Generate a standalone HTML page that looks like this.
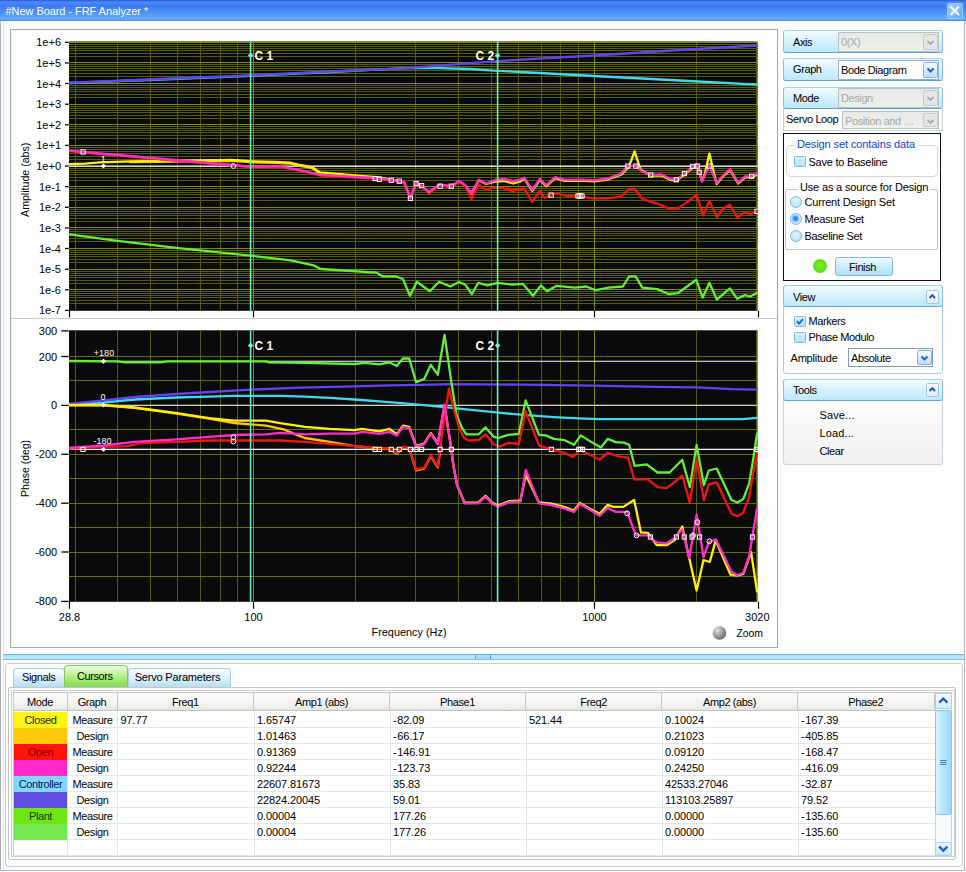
<!DOCTYPE html>
<html><head><meta charset="utf-8"><title>FRF Analyzer</title>
<style>
*{box-sizing:border-box}
html,body{margin:0;padding:0}
body{width:966px;height:872px;position:relative;overflow:hidden;background:#fcfdfc;font:11px "Liberation Sans",sans-serif;color:#000}
.abs{position:absolute}
#frame{left:0;top:0;width:964.8px;height:871.3px;border:1px solid #aab4be;border-top:none;background:#fcfdfc;box-shadow:inset 2px 0 0 #fdfdfd,inset 3px 0 0 #e4e6e6}
#tb{left:0;top:0;width:966px;height:21px;background:linear-gradient(#2458d8 0,#4c8cf6 2px,#3c7af2 6px,#4e92f8 13px,#66aefc 19px,#4a86dc 21px)}
#tb span{position:absolute;left:5.5px;top:4.5px;color:#fff;font-size:11px;letter-spacing:-.06px;white-space:nowrap}
#cls{left:947px;top:3px;width:15.5px;height:15.5px;border-radius:2px;background:linear-gradient(135deg,#9accff,#62a8f8);border:1px solid #9cccff}
#cp{left:10px;top:29px;width:767.5px;height:618.5px;border:1px solid #a0aaa2;background:#fdfefd}
#cdiv{left:11px;top:318px;width:766px;height:1px;background:#c8ccc8}
.hb{left:783px;width:160px;border:1px solid #86bcee;border-top-color:#a6d0f4;border-bottom-color:#5e9fe6;border-radius:3px;background:linear-gradient(#f4fcff 0,#dcf3fd 40%,#bde8fb 100%)}
.hb .l{position:absolute;left:9px;top:4px;letter-spacing:-.4px}
.cb{position:absolute;border:1px solid #b4c2c6;background:linear-gradient(#e6e9e6,#eef0ec);color:#a4aaa4;white-space:nowrap;overflow:hidden}
.cb.en{background:#fff;color:#000;border-color:#8fb0d0}
.cb .t{position:absolute;left:2px;top:3px;letter-spacing:-.4px}
.dd{position:absolute;right:0px;top:1px;width:15px;bottom:1px;border:1px solid #c6ccd0;border-radius:2px;background:#e4e6e4}
.cb.en .dd{border-color:#7fb2ea;background:linear-gradient(#f4faff,#bfdcf8)}
.chk{position:absolute;width:11.6px;height:11.4px;border:1px solid #80b8ec;background:linear-gradient(#d8f3fd,#b0e3fb);border-radius:1.5px}
.rad{position:absolute;width:11.8px;height:11.8px;border:1px solid #7ab6ee;background:radial-gradient(circle at 50% 30%,#e0f5fe,#b2e1fa);border-radius:50%}
.tx{position:absolute;white-space:nowrap;letter-spacing:-.4px}
table{border-collapse:collapse}
</style></head><body>
<div class="abs" id="frame"></div>
<div class="abs" id="tb"><span>#New Board - FRF Analyzer *</span></div>
<div class="abs" id="cls"><svg width="14" height="14" viewBox="0 0 14 14" style="position:absolute;left:0;top:0"><path d="M3.2 3.2L10.3 10.3M10.3 3.2L3.2 10.3" stroke="#fff" stroke-width="2.1" stroke-linecap="square"/></svg></div>
<div class="abs" id="cp"></div>
<div class="abs" id="cdiv"></div>
<svg width="966" height="872" viewBox="0 0 966 872" style="position:absolute;left:0;top:0">
<rect x="69.0" y="41.5" width="688.5" height="269.3" fill="#0a0a0a"/>
<rect x="69.0" y="330.3" width="688.5" height="271.49999999999994" fill="#0a0a0a"/>
<path d="M69.0 291.5H757.5M69.0 293.5H757.5M69.0 295.5H757.5M69.0 297.5H757.5M69.0 300.5H757.5M69.0 303.5H757.5M69.0 271.5H757.5M69.0 273.5H757.5M69.0 275.5H757.5M69.0 277.5H757.5M69.0 280.5H757.5M69.0 283.5H757.5M69.0 250.5H757.5M69.0 252.5H757.5M69.0 254.5H757.5M69.0 256.5H757.5M69.0 259.5H757.5M69.0 262.5H757.5M69.0 229.5H757.5M69.0 231.5H757.5M69.0 233.5H757.5M69.0 235.5H757.5M69.0 238.5H757.5M69.0 241.5H757.5M69.0 209.5H757.5M69.0 211.5H757.5M69.0 213.5H757.5M69.0 215.5H757.5M69.0 218.5H757.5M69.0 221.5H757.5M69.0 188.5H757.5M69.0 190.5H757.5M69.0 192.5H757.5M69.0 194.5H757.5M69.0 197.5H757.5M69.0 200.5H757.5M69.0 168.5H757.5M69.0 170.5H757.5M69.0 172.5H757.5M69.0 174.5H757.5M69.0 177.5H757.5M69.0 180.5H757.5M69.0 147.5H757.5M69.0 149.5H757.5M69.0 151.5H757.5M69.0 153.5H757.5M69.0 156.5H757.5M69.0 159.5H757.5M69.0 126.5H757.5M69.0 128.5H757.5M69.0 130.5H757.5M69.0 132.5H757.5M69.0 135.5H757.5M69.0 138.5H757.5M69.0 106.5H757.5M69.0 108.5H757.5M69.0 110.5H757.5M69.0 112.5H757.5M69.0 115.5H757.5M69.0 118.5H757.5M69.0 85.5H757.5M69.0 87.5H757.5M69.0 89.5H757.5M69.0 91.5H757.5M69.0 94.5H757.5M69.0 97.5H757.5M69.0 64.5H757.5M69.0 66.5H757.5M69.0 68.5H757.5M69.0 70.5H757.5M69.0 73.5H757.5M69.0 76.5H757.5M69.0 44.5H757.5M69.0 46.5H757.5M69.0 48.5H757.5M69.0 50.5H757.5M69.0 53.5H757.5M69.0 56.5H757.5M75.5 41.5V310.8M75.5 330.3V601.8M117.5 41.5V310.8M117.5 330.3V601.8M150.5 41.5V310.8M150.5 330.3V601.8M177.5 41.5V310.8M177.5 330.3V601.8M200.5 41.5V310.8M200.5 330.3V601.8M220.5 41.5V310.8M220.5 330.3V601.8M237.5 41.5V310.8M237.5 330.3V601.8M355.5 41.5V310.8M355.5 330.3V601.8M415.5 41.5V310.8M415.5 330.3V601.8M458.5 41.5V310.8M458.5 330.3V601.8M491.5 41.5V310.8M491.5 330.3V601.8M518.5 41.5V310.8M518.5 330.3V601.8M541.5 41.5V310.8M541.5 330.3V601.8M560.5 41.5V310.8M560.5 330.3V601.8M578.5 41.5V310.8M578.5 330.3V601.8M696.5 41.5V310.8M696.5 330.3V601.8M756.5 41.5V310.8M756.5 330.3V601.8" stroke="#565c06" stroke-width="1" fill="none" shape-rendering="crispEdges"/>
<path d="M69.0 576.5H757.5M69.0 552.5H757.5M69.0 527.5H757.5M69.0 503.5H757.5M69.0 478.5H757.5M69.0 454.5H757.5M69.0 429.5H757.5M69.0 405.5H757.5M69.0 380.5H757.5M69.0 356.5H757.5" stroke="#666e0a" stroke-width="1" fill="none" shape-rendering="crispEdges"/>
<path d="M69.0 289.5H757.5M69.0 269.5H757.5M69.0 248.5H757.5M69.0 227.5H757.5M69.0 207.5H757.5M69.0 186.5H757.5M69.0 166.5H757.5M69.0 145.5H757.5M69.0 124.5H757.5M69.0 104.5H757.5M69.0 83.5H757.5M69.0 62.5H757.5M69.0 42.5H757.5M253.5 41.5V310.8M253.5 330.3V601.8M594.5 41.5V310.8M594.5 330.3V601.8" stroke="#7e8c10" stroke-width="1" fill="none" shape-rendering="crispEdges"/>
<path d="M69.0 166.1H757.5M69.0 361.2H757.5M69.0 405.2H757.5M69.0 449.3H757.5" stroke="#f6f6f6" stroke-width="1.15" fill="none"/>
<clipPath id="ct"><rect x="69.0" y="41.5" width="689.5" height="269.3"/></clipPath>
<clipPath id="cb"><rect x="69.0" y="330.3" width="689.5" height="271.49999999999994"/></clipPath>
<g clip-path="url(#ct)">
<polyline points="130,162.2 180,161.5 232,160.8 253,162.3 275,162.8 290,163.5 300,165.9 312.3,168.2 319.8,173.2" stroke="#ffc400" stroke-width="2.3" fill="none" stroke-linejoin="round" stroke-linecap="round"/>
<polyline points="69,83 160,79.5 250,75.8 330,72 380,69.3 400,68.3 430,67.8 470,69 497,70.8 540,73 594,76 680,80.5 757,84.6" stroke="#3fd8ee" stroke-width="2.3" fill="none" stroke-linejoin="round" stroke-linecap="round"/>
<polyline points="69,82.7 115,81 160,79 250,75.3 330,71.5 400,68.6 497,61.1 594,55.5 680,50 757,45.5" stroke="#6242f2" stroke-width="2.3" fill="none" stroke-linejoin="round" stroke-linecap="round"/>
<polyline points="69.3,234.3 115.9,240.7 171.8,247.4 250,255.6 291,260.4 313.4,265.3 320.9,269 376.8,272.7 382.4,276.4 395.4,276.4 402.9,279 410,295.8 416.8,281.7 429.8,291.3 439.1,281.7 450.3,286.5 458.9,282 465.2,284.6 471.9,294 478.3,282.8 487.6,285.4 497.7,282.8 511.8,284.6 523,283.9 533,295.8 540.9,285.4 547.2,291.3 556.5,285.8 575.2,287.6 586.4,286.5 595.7,290.2 608.7,287.6 622.9,286.5 629.2,276.4 635.6,276.4 642.3,287.6 657.2,289.1 668.4,294 677.7,293.2 696.3,279.8 702.6,297.7 709.4,282.8 716.8,299.5 729.9,288.4 737.3,298.8 744.8,295.1 750.4,296.6 757,292.8" stroke="#62ee3a" stroke-width="2.3" fill="none" stroke-linejoin="round" stroke-linecap="round"/>
<polyline points="69,164.1 85,163.6 100,162.4 130,161.3 180,160.6 232,159.9 253,161.4 275,161.9 290,162.6 300,165 312.3,167.3 319.8,172.3 354.5,175.3 379.4,177.3 399.3,181.5 404.2,182.7 410.4,198.4 416.1,183.2 421.6,186 429,192.7 439,185.2 451.4,186.5 458.9,181.5 465,185.2 471.3,193.9 478.8,180.3 486.2,184 496,181.5 503.6,181 513.5,183.5 520,181.5 524.2,178.7 532.3,190.8 539.8,180 546.3,186.2 555.2,178.1 564.6,180.8 580.8,180.6 594.2,181.4 607.7,179.5 621.1,174.6 628.7,167 634.6,151.3 640.5,169.6 650.7,175.5 661.5,175.5 669.6,179.5 676.3,180.8 684.4,174.6 692.5,167.9 697.3,165.2 701.9,180 704.6,175 709.4,153.5 714,173.6 716.7,184 723.4,176 730.1,170.1 738.2,183.5 745,177.3 751.7,177.3 757,174.6" stroke="#fff200" stroke-width="2.3" fill="none" stroke-linejoin="round" stroke-linecap="round"/>
<polyline points="69,151.2 100,154 130,156.5 180,161 233,165.5 253,167.3 280,166.8 304.8,171.8 319.8,175.5 354.5,177.5 374.4,178.7 399.3,181.7 404.2,183 410.4,198.6 416.1,183.4 421.6,186.2 429,193.5 439,185.7 451.4,187 458.9,182 465,186 471.3,199.1 478.8,184.7 486.2,189.7 496,187.2 503.6,188.4 513.5,191.4 507,188.5 516.2,189.8 524.2,188.5 532.3,201.9 539.8,191.1 544.4,197.9 551.1,195.2 556.5,193.3 567.3,196 580.8,196.5 594.2,198.7 607.7,198.4 621.1,196.5 629.2,189 634.6,189 642.7,199.2 656.1,203.3 669.6,208.6 677.7,208.6 688.4,201.4 696.5,194.6 703.2,215.4 709.4,200.6 716.7,216.7 723.4,208.6 730.1,204.6 737.4,218 743.6,212.7 751.7,214 757,211.3" stroke="#f01414" stroke-width="2.3" fill="none" stroke-linejoin="round" stroke-linecap="round"/>
<polyline points="69,150.7 100,153.5 130,156 180,160.5 233,165 253,166.8 280,166.1 304.8,171.1 319.8,174.8 354.5,176.8 374.4,178 399.3,181 404.2,182.2 410.4,198.4 416.1,182.7 421.6,185.5 429,192.2 439,184.7 451.4,186 458.9,181 465,184.7 471.3,193.4 478.8,179.8 486.2,183.5 496.1,179.8 503.6,179 513.5,181 520,179.8 524.2,177.7 532.3,189.8 539.8,179 546.3,185.2 555.2,177.1 564.6,179.8 580.8,179.6 594.2,180.4 607.7,178.5 621.1,173.6 627.9,166.1 635.9,165.6 641.3,171 650.7,175 661.5,174.5 669.6,178.5 676.3,179.8 684.4,173.6 692.5,166.9 697.3,164.2 701.9,181.7 709.4,165.6 716.7,183 723.4,175 730.1,169.1 738.2,182.5 745,176.3 751.7,176.3 757,173.6" stroke="#ff2fc8" stroke-width="2.3" fill="none" stroke-linejoin="round" stroke-linecap="round"/>
</g>
<g clip-path="url(#cb)">
<polyline points="68.7,404.5 103.5,402.5 134.5,399.5 176.8,397.5 209,396.6 234,395.8 280,395.8 304.8,396.6 329.7,397.8 354.5,399.5 379.4,401.3 404.2,403.3 429.1,405.7 453.9,408.2 478.8,410.7 503.6,413.2 526.9,415.2 553.8,417.1 578,418.4 599.6,419.2 742.3,419.2 757,417.9" stroke="#3fd8ee" stroke-width="2.3" fill="none" stroke-linejoin="round" stroke-linecap="round"/>
<polyline points="68.7,404 103.5,400.3 134.5,397 176.8,394 209,392 251.3,389.6 300,387.6 354.5,386.4 389.3,385.4 434,384.6 449,384.1 520,384.6 594.2,385.6 656.1,386.9 696.5,387.4 731.5,389.1 757,389.6" stroke="#6242f2" stroke-width="2.3" fill="none" stroke-linejoin="round" stroke-linecap="round"/>
<polyline points="68.7,361 117,361.4 125,362.3 160,362.3 168,361.3 266,361.3 268.7,362.3 304.8,362.8 354.5,364 364.5,362.8 379.4,364.3 389.3,362.3 396.8,366 403,358.5 409.2,358.5 416.1,382.1 424.1,379.2 430.8,364.8 437.8,374.7 444.5,334.9 451.4,382.1 456.4,414.4 461.4,426.9 466.3,434.3 478.8,434.3 485.5,427.4 493.7,436.8 498.6,438 508,434.8 518.8,434 525.6,400.4 539,434.8 545.8,435.4 553.8,438.9 564.6,440.2 574,444.8 580.8,435.4 591.5,442.1 600.9,447.5 607.7,438.9 615.7,442.1 623.8,442.6 629.2,444.8 634.6,465.8 646.7,464.4 657.5,472.5 669.6,472.5 682.3,459.7 689.8,487.2 696.6,444.9 703.9,485.2 708.8,470.5 716.7,468.5 731.5,500 737.4,502.5 743.3,499 749.2,483.3 753.1,459.7 757,434" stroke="#62ee3a" stroke-width="2.3" fill="none" stroke-linejoin="round" stroke-linecap="round"/>
<polyline points="68.7,405.3 103.5,405.3 134.5,407.8 176.8,413.6 209,418.6 234,423 266,425.6 283.6,429.3 292.4,433.1 304.8,438 329.7,441.8 354.5,446.2 374.4,448 389.3,449 396.8,453.7 403,447.4 409.2,448.7 416.1,470.4 424.1,468.7 430.8,456.1 437.8,467.4 441,445" stroke="#ffc400" stroke-width="2.3" fill="none" stroke-linejoin="round" stroke-linecap="round"/>
<polyline points="68.7,405 103.5,405 134.5,407.5 176.8,413.2 209,418.2 234,420.7 266,420.7 280,423.1 304.8,426.9 329.7,428.9 354.5,430.1 362,428.9 379.4,431.3 389.3,428.9 396.8,434.3 403,425.6 409.2,426.9 416.1,446 424.1,443.5 430.8,433 437.8,443.5 444.5,405.5 451.4,449.2 453.3,464.8 457,484.7 464.5,502.6 478.1,502.6 485.6,495.8 491.8,502.6 498,505.6 509.2,501.1 520.4,500.6 525.8,474.8 539,502.4 551.4,503.6 563.9,506.8 573.8,510.5 580,503 589.8,508.8 599.7,513.8 607.5,504.9 613.4,506.9 623.3,506.9 634.1,500 641,532.4 647.9,532.8 656.7,545.2 666.5,545.2 674.4,540.3 682.3,526.5 689.2,558 696.6,590.5 703.5,560 709.8,562 715.7,540.3 730.5,574.7 737.4,575.7 743.3,573.8 751.1,552.1 757,591.5" stroke="#fff200" stroke-width="2.3" fill="none" stroke-linejoin="round" stroke-linecap="round"/>
<polyline points="68.7,448.5 103.5,447.2 127,446.2 142,443 176.8,441.8 209,440.5 280,440.5 304.8,441.8 329.7,443.8 354.5,446.2 379.4,448 389.3,448.7 396.8,453 403,446.7 409.2,448 416.1,469.6 424.1,467.9 430.8,455.4 437.8,466.6 442.7,429.3 449,388.4 453.9,409.5 458.9,426.9 463.9,438 468.8,440.5 478.8,439.8 485.5,434.3 493.7,444.3 499.9,446.7 508,442.9 518.8,444 525.6,411.1 539,445.3 551.1,449.4 564.6,452.9 572.7,456.9 579.4,450.2 589.8,454.8 599.7,459.7 607.5,452.8 619.3,456.7 628.2,457.7 634.1,479.3 647.9,479.3 657.7,487.2 666.5,488.2 674.4,482.3 682.3,475.4 689.8,502.9 696.6,459.7 703.9,500 708.8,484.3 716.7,482.3 731.5,513.8 737.4,516.3 743.3,512.8 749.2,497 753.1,473.4 757,453.8" stroke="#f01414" stroke-width="2.3" fill="none" stroke-linejoin="round" stroke-linecap="round"/>
<polyline points="68.7,448 103.5,445.5 134.5,441.8 176.8,439.3 209,436.8 234,435 266,434.3 280,432.8 304.8,434.3 329.7,433.6 354.5,433.6 362,431.8 379.4,433.8 389.3,431.8 396.8,435.6 403,426.9 409.2,428.1 416.1,446.7 424.1,444.3 430.8,433.6 437.8,444.3 444.5,404.5 451.4,449.2 453.3,464.8 457,484.7 464.5,503.4 478.1,503.4 485.6,496.6 491.8,503.4 498,506.6 509.2,502.1 520.4,501.6 525.8,469.8 539,503.4 551.4,505.1 563.9,508.3 573.8,512 580,504.1 589.8,509.8 599.7,515.7 607.5,507.9 615.4,511.8 627.2,511.8 631.1,522.6 636.1,535.4 647.9,535.4 656.7,542.3 666.5,543.3 674.4,538.3 682.3,529.5 689.2,558 696.6,514.7 703.5,557 708.8,542.3 715.7,539.3 731.5,571.8 737.4,575.3 743.3,572.8 749.2,556 753.1,532.4 757,508.8" stroke="#ff2fc8" stroke-width="2.3" fill="none" stroke-linejoin="round" stroke-linecap="round"/>
</g>
<path d="M250.6 41.5V310.8M250.6 330.3V601.8" stroke="#6aecc0" stroke-width="1.6" fill="none"/>
<path d="M497.6 41.5V310.8M497.6 330.3V601.8" stroke="#6aecc0" stroke-width="1.6" fill="none"/>
<g stroke="#fff" stroke-width="1" fill="none"><rect x="81" y="149.9" width="4.2" height="4.2"/><rect x="373.1" y="176.4" width="4.2" height="4.2"/><rect x="377.3" y="177.2" width="4.2" height="4.2"/><rect x="389.2" y="178.1" width="4.2" height="4.2"/><rect x="397.2" y="179.1" width="4.2" height="4.2"/><rect x="408.3" y="196.3" width="4.2" height="4.2"/><rect x="414" y="181.4" width="4.2" height="4.2"/><rect x="419.5" y="183.4" width="4.2" height="4.2"/><rect x="438.1" y="184.1" width="4.2" height="4.2"/><rect x="449.3" y="184.1" width="4.2" height="4.2"/><rect x="549" y="193.1" width="4.2" height="4.2"/><rect x="575.9" y="193.9" width="4.2" height="4.2"/><rect x="577.9" y="193.9" width="4.2" height="4.2"/><rect x="579.9" y="193.9" width="4.2" height="4.2"/><rect x="625.8" y="164" width="4.2" height="4.2"/><rect x="633.8" y="164" width="4.2" height="4.2"/><rect x="648.6" y="172.9" width="4.2" height="4.2"/><rect x="674.2" y="177.7" width="4.2" height="4.2"/><rect x="682.3" y="171.5" width="4.2" height="4.2"/><rect x="690.4" y="164.3" width="4.2" height="4.2"/><rect x="695.2" y="164" width="4.2" height="4.2"/><rect x="697.1" y="170.2" width="4.2" height="4.2"/><rect x="707.3" y="164" width="4.2" height="4.2"/><rect x="749.6" y="174.2" width="4.2" height="4.2"/><rect x="754.9" y="209.2" width="4.2" height="4.2"/><rect x="80.9" y="447.3" width="4.2" height="4.2"/><rect x="373.1" y="447.3" width="4.2" height="4.2"/><rect x="377.3" y="447.3" width="4.2" height="4.2"/><rect x="389.2" y="447.3" width="4.2" height="4.2"/><rect x="397.2" y="447.3" width="4.2" height="4.2"/><rect x="408.3" y="447.3" width="4.2" height="4.2"/><rect x="414" y="447.3" width="4.2" height="4.2"/><rect x="419.5" y="447.3" width="4.2" height="4.2"/><rect x="438.1" y="447.3" width="4.2" height="4.2"/><rect x="449.3" y="447.3" width="4.2" height="4.2"/><rect x="549.3" y="447.3" width="4.2" height="4.2"/><rect x="576.7" y="447.3" width="4.2" height="4.2"/><rect x="578.5" y="447.3" width="4.2" height="4.2"/><rect x="580.4" y="447.3" width="4.2" height="4.2"/><rect x="754.9" y="447.3" width="4.2" height="4.2"/><rect x="648.3" y="534.9" width="4.2" height="4.2"/><rect x="674.3" y="534.9" width="4.2" height="4.2"/><rect x="682.1" y="534.9" width="4.2" height="4.2"/><rect x="690" y="534.9" width="4.2" height="4.2"/><rect x="697.5" y="534.9" width="4.2" height="4.2"/><rect x="750.4" y="534.9" width="4.2" height="4.2"/><circle cx="233.4" cy="166" r="2.4"/><circle cx="233.4" cy="437.3" r="2.4"/><circle cx="233.4" cy="441.5" r="2.4"/><circle cx="627.2" cy="513.4" r="2.4"/><circle cx="636.5" cy="535.4" r="2.4"/><circle cx="697.4" cy="522.2" r="2.4"/><circle cx="709.4" cy="541.3" r="2.4"/><circle cx="693.1" cy="535.4" r="2.4"/></g>
<path d="M100.9 166L103.5 163.4L106.1 166L103.5 168.6Z" fill="#fff"/>
<path d="M100.9 361.3L103.5 358.7L106.1 361.3L103.5 363.9Z" fill="#fff"/>
<path d="M100.9 405L103.5 402.4L106.1 405L103.5 407.6Z" fill="#fff"/>
<path d="M100.9 449.4L103.5 446.8L106.1 449.4L103.5 452Z" fill="#fff"/>
<path d="M247.8 55.5L250.6 52.7L253.4 55.5L250.6 58.3Z" fill="#7af2cc"/>
<path d="M494.8 55.5L497.6 52.7L500.4 55.5L497.6 58.3Z" fill="#7af2cc"/>
<path d="M247.8 345.5L250.6 342.7L253.4 345.5L250.6 348.3Z" fill="#7af2cc"/>
<path d="M494.8 345.5L497.6 342.7L500.4 345.5L497.6 348.3Z" fill="#7af2cc"/>
<g font-family="'Liberation Sans',sans-serif" font-size="11" fill="#000">
<text x="61" y="46.3" text-anchor="end">1e+6</text>
<path d="M65 42.3H68.7" stroke="#000" stroke-width="1.3"/>
<text x="61" y="66.9" text-anchor="end">1e+5</text>
<path d="M65 62.9H68.7" stroke="#000" stroke-width="1.3"/>
<text x="61" y="87.5" text-anchor="end">1e+4</text>
<path d="M65 83.5H68.7" stroke="#000" stroke-width="1.3"/>
<text x="61" y="108.2" text-anchor="end">1e+3</text>
<path d="M65 104.2H68.7" stroke="#000" stroke-width="1.3"/>
<text x="61" y="128.8" text-anchor="end">1e+2</text>
<path d="M65 124.8H68.7" stroke="#000" stroke-width="1.3"/>
<text x="61" y="149.4" text-anchor="end">1e+1</text>
<path d="M65 145.4H68.7" stroke="#000" stroke-width="1.3"/>
<text x="61" y="170" text-anchor="end">1e+0</text>
<path d="M65 166H68.7" stroke="#000" stroke-width="1.3"/>
<text x="61" y="190.7" text-anchor="end">1e-1</text>
<path d="M65 186.7H68.7" stroke="#000" stroke-width="1.3"/>
<text x="61" y="211.3" text-anchor="end">1e-2</text>
<path d="M65 207.3H68.7" stroke="#000" stroke-width="1.3"/>
<text x="61" y="231.9" text-anchor="end">1e-3</text>
<path d="M65 227.9H68.7" stroke="#000" stroke-width="1.3"/>
<text x="61" y="252.5" text-anchor="end">1e-4</text>
<path d="M65 248.5H68.7" stroke="#000" stroke-width="1.3"/>
<text x="61" y="273.2" text-anchor="end">1e-5</text>
<path d="M65 269.2H68.7" stroke="#000" stroke-width="1.3"/>
<text x="61" y="293.8" text-anchor="end">1e-6</text>
<path d="M65 289.8H68.7" stroke="#000" stroke-width="1.3"/>
<text x="61" y="314.4" text-anchor="end">1e-7</text>
<path d="M65 310.4H68.7" stroke="#000" stroke-width="1.3"/>
<text x="57.2" y="334.9" text-anchor="end">300</text>
<path d="M61.3 330.9H68.7" stroke="#000" stroke-width="1.3"/>
<text x="57.2" y="360.5" text-anchor="end">200</text>
<path d="M61.3 356.5H68.7" stroke="#000" stroke-width="1.3"/>
<text x="57.2" y="409.4" text-anchor="end">0</text>
<path d="M61.3 405.4H68.7" stroke="#000" stroke-width="1.3"/>
<text x="57.2" y="458.3" text-anchor="end">-200</text>
<path d="M61.3 454.3H68.7" stroke="#000" stroke-width="1.3"/>
<text x="57.2" y="507.2" text-anchor="end">-400</text>
<path d="M61.3 503.2H68.7" stroke="#000" stroke-width="1.3"/>
<text x="57.2" y="556" text-anchor="end">-600</text>
<path d="M61.3 552H68.7" stroke="#000" stroke-width="1.3"/>
<text x="57.2" y="605.4" text-anchor="end">-800</text>
<path d="M61.3 601.4H68.7" stroke="#000" stroke-width="1.3"/>
<path d="M69.5 310.8V317.3M69.5 601.8V608.8" stroke="#000" stroke-width="1.2"/>
<text x="69.5" y="621" text-anchor="middle">28.8</text>
<path d="M253.5 310.8V317.3M253.5 601.8V608.8" stroke="#000" stroke-width="1.2"/>
<text x="253.5" y="621" text-anchor="middle">100</text>
<path d="M594.5 310.8V317.3M594.5 601.8V608.8" stroke="#000" stroke-width="1.2"/>
<text x="594.5" y="621" text-anchor="middle">1000</text>
<path d="M758.5 310.8V317.3M758.5 601.8V608.8" stroke="#000" stroke-width="1.2"/>
<text x="757.3" y="621" text-anchor="middle">3020</text>
<text x="409" y="636" text-anchor="middle" textLength="75" lengthAdjust="spacingAndGlyphs">Frequency (Hz)</text>
<text x="736.5" y="637" textLength="26.5" lengthAdjust="spacingAndGlyphs">Zoom</text>
<text transform="translate(28.7,179.8) rotate(-90)" text-anchor="middle" textLength="74.3" lengthAdjust="spacingAndGlyphs">Amplitude (abs)</text>
<text transform="translate(28.7,468.4) rotate(-90)" text-anchor="middle" textLength="57" lengthAdjust="spacingAndGlyphs">Phase (deg)</text>
</g>
<g font-family="'Liberation Sans',sans-serif" font-size="12" font-weight="bold" fill="#fff">
<text x="254.6" y="60">C 1</text>
<text x="494.1" y="60" text-anchor="end">C 2</text>
<text x="254.6" y="350">C 1</text>
<text x="494.1" y="350" text-anchor="end">C 2</text>
</g>
<g font-family="'Liberation Sans',sans-serif" font-size="9" fill="#fff" text-anchor="middle">
<text x="103.2" y="161.6">1</text>
<text x="104" y="355.5">+180</text><text x="103" y="400.3">0</text><text x="102.5" y="444">-180</text>
</g>
<defs><radialGradient id="sph" cx="0.35" cy="0.3" r="0.75"><stop offset="0" stop-color="#e4e4e4"/><stop offset="0.55" stop-color="#9a9a9a"/><stop offset="1" stop-color="#6a6a6a"/></radialGradient></defs>
<circle cx="719.5" cy="633" r="6.8" fill="url(#sph)"/>
</svg>
<!-- right side panel -->
<div class="abs hb" style="top:30px;height:22.7px"><span class="l" style="top:4.5px">Axis</span></div>
<div class="cb" style="left:838px;top:32px;width:101px;height:19.5px"><span class="t">0(X)</span><div class="dd"><svg width="13" height="15" viewBox="0 0 13 15"><path d="M3.5 6L6.5 9L9.5 6" stroke="#a8acb0" stroke-width="1.8" fill="none"/></svg></div></div>
<div class="abs hb" style="top:58.3px;height:22.4px"><span class="l" style="top:4.2px">Graph</span></div>
<div class="cb en" style="left:838px;top:60.2px;width:101px;height:19.5px"><span class="t">Bode Diagram</span><div class="dd"><svg width="13" height="15" viewBox="0 0 13 15"><path d="M3.5 5.5L6.5 8.5L9.5 5.5" stroke="#2a5ad8" stroke-width="2" fill="none"/></svg></div></div>
<div class="abs hb" style="top:86.5px;height:22px"><span class="l">Mode</span></div>
<div class="cb" style="left:838px;top:88.2px;width:101px;height:19.5px"><span class="t">Design</span><div class="dd"><svg width="13" height="15" viewBox="0 0 13 15"><path d="M3.5 6L6.5 9L9.5 6" stroke="#a8acb0" stroke-width="1.8" fill="none"/></svg></div></div>
<div class="abs" style="left:783px;top:108.6px;width:160px;height:22px;border:1px solid #c8d0d4;border-top:none;background:#fdfdfb"></div>
<div class="tx" style="left:786px;top:113px">Servo Loop</div>
<div class="cb" style="left:842px;top:110.5px;width:97px;height:18.5px"><span class="t">Position and …</span><div class="dd"><svg width="13" height="15" viewBox="0 0 13 15"><path d="M3.5 6L6.5 9L9.5 6" stroke="#a8acb0" stroke-width="1.8" fill="none"/></svg></div></div>
<!-- design box -->
<div class="abs" style="left:783px;top:133px;width:158px;height:148px;border:1.3px solid #111;background:#fefefe"></div>
<div class="abs" style="left:786px;top:145px;width:152px;height:31.5px;border:1px solid #d4d8cc;border-radius:5px"></div>
<div class="tx" style="left:794px;top:138px;padding:0 3px;background:#fefefe;color:#0a46d2;letter-spacing:-.1px">Design set contains data</div>
<div class="chk" style="left:794px;top:156px"></div>
<div class="tx" style="left:808.5px;top:155.5px;letter-spacing:-.23px">Save to Baseline</div>
<div class="abs" style="left:784.6px;top:189px;width:153.4px;height:61px;border:1px solid #b4c2cc;border-radius:2px"></div>
<div class="tx" style="left:797px;top:180.5px;padding:0 3px;background:#fefefe;letter-spacing:-.17px">Use as a source for Design</div>
<div class="rad" style="left:789.9px;top:196.2px"></div><div class="tx" style="left:804.5px;top:195.5px;letter-spacing:-.18px">Current Design Set</div>
<div class="rad" style="left:789.9px;top:213.1px"><div style="position:absolute;left:2.4px;top:2.4px;width:5px;height:5px;border-radius:50%;background:#3c8cf0;box-shadow:0 0 0 1.2px #8cc4f6"></div></div><div class="tx" style="left:804.5px;top:212.5px;letter-spacing:-.27px">Measure Set</div>
<div class="rad" style="left:789.9px;top:229.9px"></div><div class="tx" style="left:804.5px;top:229.5px;letter-spacing:-.36px">Baseline Set</div>
<div class="abs" style="left:813px;top:259px;width:14px;height:14px;border-radius:50%;background:radial-gradient(circle at 50% 45%,#7af020,#5cdc10 70%,#8ae850)"></div>
<div class="abs" style="left:835px;top:257px;width:58px;height:18.5px;border:1px solid #86b6e4;border-radius:3px;background:linear-gradient(#f2fbff,#c8ecfc 55%,#b2e0f9);text-align:center;line-height:18px;letter-spacing:-.4px;padding-right:3px">Finish</div>
<!-- view -->
<div class="abs" style="left:783px;top:285.4px;width:160px;height:88.6px;border:1px solid #a8cdee;border-radius:3px;background:#fefefe"></div>
<div class="abs hb" style="top:285.4px;height:22.1px"><span class="l" style="top:4.6px">View</span></div>
<div class="abs" style="left:926px;top:289.5px;width:12.5px;height:14px;border:1px solid #a0c6ec;border-radius:2px;background:linear-gradient(#fff,#dcecfa)"><svg width="11" height="12" viewBox="0 0 11 12" style="position:absolute;left:0;top:0"><path d="M2.5 7L5.3 4.2L8 7" stroke="#1c4ed0" stroke-width="1.9" fill="none"/></svg></div>
<div class="chk" style="left:794px;top:315.5px"><svg width="10" height="10" viewBox="0 0 10 10" style="position:absolute;left:0;top:0"><path d="M1.8 4.2L4 6.6L8 2.2" stroke="#2260dc" stroke-width="1.9" fill="none"/></svg></div>
<div class="tx" style="left:808.5px;top:314.5px">Markers</div>
<div class="chk" style="left:794px;top:331.5px"></div>
<div class="tx" style="left:808.5px;top:330.5px">Phase Modulo</div>
<div class="tx" style="left:790.5px;top:351.5px;letter-spacing:-.2px">Amplitude</div>
<div class="cb en" style="left:848px;top:348px;width:85px;height:18.5px;border-color:#7f9db9"><span class="t">Absolute</span><div class="dd"><svg width="13" height="15" viewBox="0 0 13 15"><path d="M3.5 5.5L6.5 8.5L9.5 5.5" stroke="#2a5ad8" stroke-width="2" fill="none"/></svg></div></div>
<!-- tools -->
<div class="abs" style="left:783px;top:379px;width:160px;height:85.5px;border:1px solid #c4d4e0;border-radius:3px;background:linear-gradient(#fdfdfd 25%,#f1f1ef)"></div>
<div class="abs hb" style="top:379px;height:21.5px"><span class="l">Tools</span></div>
<div class="abs" style="left:926px;top:382.5px;width:12.5px;height:14px;border:1px solid #a0c6ec;border-radius:2px;background:linear-gradient(#fff,#dcecfa)"><svg width="11" height="12" viewBox="0 0 11 12" style="position:absolute;left:0;top:0"><path d="M2.5 7L5.3 4.2L8 7" stroke="#1c4ed0" stroke-width="1.9" fill="none"/></svg></div>
<div class="tx" style="left:819.5px;top:409px;letter-spacing:.12px">Save...</div>
<div class="tx" style="left:819.5px;top:427px;letter-spacing:.12px">Load...</div>
<div class="tx" style="left:819.5px;top:445px">Clear</div>

<!-- splitter + bottom panel -->
<div class="abs" style="left:3px;top:653.9px;width:960.5px;height:6.2px;background:linear-gradient(#a8e0fb,#bcebfd);border-top:1px solid #74b2f0;border-bottom:1px solid #7cbaf2"></div>
<div class="abs" style="left:475.2px;top:654.9px;width:15.6px;height:4.2px;border-left:1px solid #5a9ce6;border-right:1px solid #5a9ce6;background:#a4dcfa"></div>
<div class="abs" style="left:4.5px;top:663px;width:958.2px;height:203.6px;border:1px solid #c8ccc8;border-radius:3px;background:#fcfdfc"></div>
<div class="abs" style="left:7.5px;top:686.5px;width:948.6px;height:173.5px;border:1px solid #c0c8cc;border-radius:2px;background:#fdfdfc"></div>
<div class="abs" style="left:13px;top:667.5px;width:51.5px;height:19.5px;border:1px solid #a4cdea;border-bottom:none;border-radius:4px 4px 0 0;background:linear-gradient(#fbfdfe,#d4ecfa 60%,#b6def6);text-align:center;line-height:17.5px;letter-spacing:-.4px;">Signals</div>
<div class="abs" style="left:127.5px;top:667.5px;width:103px;height:19.5px;border:1px solid #a4cdea;border-bottom:none;border-radius:4px 4px 0 0;background:linear-gradient(#fbfdfe,#d4ecfa 60%,#b6def6);text-align:center;line-height:17.5px;letter-spacing:-.4px;letter-spacing:-.19px;padding-right:3px">Servo Parameters</div>
<div class="abs" style="left:64px;top:665px;width:64px;height:22px;border:1px solid #86c860;border-bottom:none;border-radius:4px 4px 0 0;background:linear-gradient(#f4fde8,#b8f08c 45%,#7fdc48);text-align:center;line-height:20px;letter-spacing:-.4px;padding-right:2.5px">Cursors</div>
<div class="abs" style="left:10.5px;top:689.7px;width:944px;height:167.6px;border:1px solid #cdd3d5;background:#fefefe"></div>
<div class="abs" style="left:12.8px;top:692.2px;width:939.6px;height:164px;border:1px solid #c4ccd0;background:#fff"></div>
<div class="abs" style="left:13.5px;top:693px;width:921.0px;height:18px;background:linear-gradient(#fdfdfd,#f1f1ef 70%,#e4e4e0);border-bottom:1px solid #c0c4c4"></div>
<div class="abs" style="left:13.5px;top:693px;width:54.0px;height:18px;border-right:1px solid #c4c8c8;text-align:center;line-height:18.6px;letter-spacing:-.4px">Mode</div>
<div class="abs" style="left:67.5px;top:693px;width:50.0px;height:18px;border-right:1px solid #c4c8c8;text-align:center;line-height:18.6px;letter-spacing:-.4px">Graph</div>
<div class="abs" style="left:117.5px;top:693px;width:136.5px;height:18px;border-right:1px solid #c4c8c8;text-align:center;line-height:18.6px;letter-spacing:-.4px">Freq1</div>
<div class="abs" style="left:254px;top:693px;width:136px;height:18px;border-right:1px solid #c4c8c8;text-align:center;line-height:18.6px;letter-spacing:-.4px">Amp1 (abs)</div>
<div class="abs" style="left:390px;top:693px;width:136px;height:18px;border-right:1px solid #c4c8c8;text-align:center;line-height:18.6px;letter-spacing:-.4px">Phase1</div>
<div class="abs" style="left:526px;top:693px;width:136px;height:18px;border-right:1px solid #c4c8c8;text-align:center;line-height:18.6px;letter-spacing:-.4px">Freq2</div>
<div class="abs" style="left:662px;top:693px;width:136px;height:18px;border-right:1px solid #c4c8c8;text-align:center;line-height:18.6px;letter-spacing:-.4px">Amp2 (abs)</div>
<div class="abs" style="left:798px;top:693px;width:136.5px;height:18px;border-right:1px solid #c4c8c8;text-align:center;line-height:18.6px;letter-spacing:-.4px">Phase2</div>
<div class="abs" style="left:13.5px;top:727.0px;width:921.0px;height:1px;background:#e2e6e8"></div>
<div class="abs" style="left:13.5px;top:711.5px;width:54.0px;height:16px;background:#fff514;color:#1a1a00;text-align:center;line-height:17px;letter-spacing:-.4px">Closed</div>
<div class="abs" style="left:67.5px;top:711.5px;width:50.0px;height:16px;text-align:center;line-height:17px;letter-spacing:-.4px">Measure</div>
<div class="abs" style="left:120.5px;top:711.5px;height:16px;line-height:17px;letter-spacing:-.1px;white-space:nowrap">97.77</div>
<div class="abs" style="left:257px;top:711.5px;height:16px;line-height:17px;letter-spacing:-.1px;white-space:nowrap">1.65747</div>
<div class="abs" style="left:393px;top:711.5px;height:16px;line-height:17px;letter-spacing:-.1px;white-space:nowrap"><span style="letter-spacing:.6px">-</span>82.09</div>
<div class="abs" style="left:529px;top:711.5px;height:16px;line-height:17px;letter-spacing:-.1px;white-space:nowrap">521.44</div>
<div class="abs" style="left:665px;top:711.5px;height:16px;line-height:17px;letter-spacing:-.1px;white-space:nowrap">0.10024</div>
<div class="abs" style="left:801px;top:711.5px;height:16px;line-height:17px;letter-spacing:-.1px;white-space:nowrap"><span style="letter-spacing:.6px">-</span>167.39</div>
<div class="abs" style="left:13.5px;top:743.0px;width:921.0px;height:1px;background:#e2e6e8"></div>
<div class="abs" style="left:13.5px;top:727.5px;width:54.0px;height:16px;background:#ffc80a;color:#000;text-align:center;line-height:17px;letter-spacing:-.4px"></div>
<div class="abs" style="left:67.5px;top:727.5px;width:50.0px;height:16px;text-align:center;line-height:17px;letter-spacing:-.4px">Design</div>
<div class="abs" style="left:257px;top:727.5px;height:16px;line-height:17px;letter-spacing:-.1px;white-space:nowrap">1.01463</div>
<div class="abs" style="left:393px;top:727.5px;height:16px;line-height:17px;letter-spacing:-.1px;white-space:nowrap"><span style="letter-spacing:.6px">-</span>66.17</div>
<div class="abs" style="left:665px;top:727.5px;height:16px;line-height:17px;letter-spacing:-.1px;white-space:nowrap">0.21023</div>
<div class="abs" style="left:801px;top:727.5px;height:16px;line-height:17px;letter-spacing:-.1px;white-space:nowrap"><span style="letter-spacing:.6px">-</span>405.85</div>
<div class="abs" style="left:13.5px;top:759.0px;width:921.0px;height:1px;background:#e2e6e8"></div>
<div class="abs" style="left:13.5px;top:743.5px;width:54.0px;height:16px;background:#ff140a;color:#800000;text-align:center;line-height:17px;letter-spacing:-.4px">Open</div>
<div class="abs" style="left:67.5px;top:743.5px;width:50.0px;height:16px;text-align:center;line-height:17px;letter-spacing:-.4px">Measure</div>
<div class="abs" style="left:257px;top:743.5px;height:16px;line-height:17px;letter-spacing:-.1px;white-space:nowrap">0.91369</div>
<div class="abs" style="left:393px;top:743.5px;height:16px;line-height:17px;letter-spacing:-.1px;white-space:nowrap"><span style="letter-spacing:.6px">-</span>146.91</div>
<div class="abs" style="left:665px;top:743.5px;height:16px;line-height:17px;letter-spacing:-.1px;white-space:nowrap">0.09120</div>
<div class="abs" style="left:801px;top:743.5px;height:16px;line-height:17px;letter-spacing:-.1px;white-space:nowrap"><span style="letter-spacing:.6px">-</span>168.47</div>
<div class="abs" style="left:13.5px;top:775.0px;width:921.0px;height:1px;background:#e2e6e8"></div>
<div class="abs" style="left:13.5px;top:759.5px;width:54.0px;height:16px;background:#ff28c8;color:#000;text-align:center;line-height:17px;letter-spacing:-.4px"></div>
<div class="abs" style="left:67.5px;top:759.5px;width:50.0px;height:16px;text-align:center;line-height:17px;letter-spacing:-.4px">Design</div>
<div class="abs" style="left:257px;top:759.5px;height:16px;line-height:17px;letter-spacing:-.1px;white-space:nowrap">0.92244</div>
<div class="abs" style="left:393px;top:759.5px;height:16px;line-height:17px;letter-spacing:-.1px;white-space:nowrap"><span style="letter-spacing:.6px">-</span>123.73</div>
<div class="abs" style="left:665px;top:759.5px;height:16px;line-height:17px;letter-spacing:-.1px;white-space:nowrap">0.24250</div>
<div class="abs" style="left:801px;top:759.5px;height:16px;line-height:17px;letter-spacing:-.1px;white-space:nowrap"><span style="letter-spacing:.6px">-</span>416.09</div>
<div class="abs" style="left:13.5px;top:791.0px;width:921.0px;height:1px;background:#e2e6e8"></div>
<div class="abs" style="left:13.5px;top:775.5px;width:54.0px;height:16px;background:#82d7fa;color:#00206a;text-align:center;line-height:17px;letter-spacing:-.4px">Controller</div>
<div class="abs" style="left:67.5px;top:775.5px;width:50.0px;height:16px;text-align:center;line-height:17px;letter-spacing:-.4px">Measure</div>
<div class="abs" style="left:257px;top:775.5px;height:16px;line-height:17px;letter-spacing:-.1px;white-space:nowrap">22607.81673</div>
<div class="abs" style="left:393px;top:775.5px;height:16px;line-height:17px;letter-spacing:-.1px;white-space:nowrap">35.83</div>
<div class="abs" style="left:665px;top:775.5px;height:16px;line-height:17px;letter-spacing:-.1px;white-space:nowrap">42533.27046</div>
<div class="abs" style="left:801px;top:775.5px;height:16px;line-height:17px;letter-spacing:-.1px;white-space:nowrap"><span style="letter-spacing:.6px">-</span>32.87</div>
<div class="abs" style="left:13.5px;top:807.0px;width:921.0px;height:1px;background:#e2e6e8"></div>
<div class="abs" style="left:13.5px;top:791.5px;width:54.0px;height:16px;background:#5f4be1;color:#000;text-align:center;line-height:17px;letter-spacing:-.4px"></div>
<div class="abs" style="left:67.5px;top:791.5px;width:50.0px;height:16px;text-align:center;line-height:17px;letter-spacing:-.4px">Design</div>
<div class="abs" style="left:257px;top:791.5px;height:16px;line-height:17px;letter-spacing:-.1px;white-space:nowrap">22824.20045</div>
<div class="abs" style="left:393px;top:791.5px;height:16px;line-height:17px;letter-spacing:-.1px;white-space:nowrap">59.01</div>
<div class="abs" style="left:665px;top:791.5px;height:16px;line-height:17px;letter-spacing:-.1px;white-space:nowrap">113103.25897</div>
<div class="abs" style="left:801px;top:791.5px;height:16px;line-height:17px;letter-spacing:-.1px;white-space:nowrap">79.52</div>
<div class="abs" style="left:13.5px;top:823.0px;width:921.0px;height:1px;background:#e2e6e8"></div>
<div class="abs" style="left:13.5px;top:807.5px;width:54.0px;height:16px;background:#6ee614;color:#104010;text-align:center;line-height:17px;letter-spacing:-.4px">Plant</div>
<div class="abs" style="left:67.5px;top:807.5px;width:50.0px;height:16px;text-align:center;line-height:17px;letter-spacing:-.4px">Measure</div>
<div class="abs" style="left:257px;top:807.5px;height:16px;line-height:17px;letter-spacing:-.1px;white-space:nowrap">0.00004</div>
<div class="abs" style="left:393px;top:807.5px;height:16px;line-height:17px;letter-spacing:-.1px;white-space:nowrap">177.26</div>
<div class="abs" style="left:665px;top:807.5px;height:16px;line-height:17px;letter-spacing:-.1px;white-space:nowrap">0.00000</div>
<div class="abs" style="left:801px;top:807.5px;height:16px;line-height:17px;letter-spacing:-.1px;white-space:nowrap"><span style="letter-spacing:.6px">-</span>135.60</div>
<div class="abs" style="left:13.5px;top:839.0px;width:921.0px;height:1px;background:#e2e6e8"></div>
<div class="abs" style="left:13.5px;top:823.5px;width:54.0px;height:16px;background:#73e650;color:#000;text-align:center;line-height:17px;letter-spacing:-.4px"></div>
<div class="abs" style="left:67.5px;top:823.5px;width:50.0px;height:16px;text-align:center;line-height:17px;letter-spacing:-.4px">Design</div>
<div class="abs" style="left:257px;top:823.5px;height:16px;line-height:17px;letter-spacing:-.1px;white-space:nowrap">0.00004</div>
<div class="abs" style="left:393px;top:823.5px;height:16px;line-height:17px;letter-spacing:-.1px;white-space:nowrap">177.26</div>
<div class="abs" style="left:665px;top:823.5px;height:16px;line-height:17px;letter-spacing:-.1px;white-space:nowrap">0.00000</div>
<div class="abs" style="left:801px;top:823.5px;height:16px;line-height:17px;letter-spacing:-.1px;white-space:nowrap"><span style="letter-spacing:.6px">-</span>135.60</div>
<div class="abs" style="left:13.5px;top:855.0px;width:921.0px;height:1px;background:#e2e6e8"></div>
<div class="abs" style="left:67.0px;top:711px;width:1px;height:144.5px;background:#e0e4e6"></div>
<div class="abs" style="left:117.0px;top:711px;width:1px;height:144.5px;background:#e0e4e6"></div>
<div class="abs" style="left:253.5px;top:711px;width:1px;height:144.5px;background:#e0e4e6"></div>
<div class="abs" style="left:389.5px;top:711px;width:1px;height:144.5px;background:#e0e4e6"></div>
<div class="abs" style="left:525.5px;top:711px;width:1px;height:144.5px;background:#e0e4e6"></div>
<div class="abs" style="left:661.5px;top:711px;width:1px;height:144.5px;background:#e0e4e6"></div>
<div class="abs" style="left:797.5px;top:711px;width:1px;height:144.5px;background:#e0e4e6"></div>
<div class="abs" style="left:935.3px;top:693px;width:16.6px;height:162.6px;background:#f6fbfe;border-left:1px solid #b4daf6;border-right:1px solid #b4daf6"></div>
<div class="abs" style="left:935.3px;top:693px;width:16.6px;height:15.8px;border:1px solid #a4d0f2;border-radius:2.5px;background:linear-gradient(#f4fcff,#d0effc)"><svg width="15" height="14" viewBox="0 0 15 14" style="position:absolute;left:0;top:0"><path d="M3.2 8.6L7.3 4.6L11.4 8.6" stroke="#2a58d4" stroke-width="2.3" fill="none"/></svg></div>
<div class="abs" style="left:935.3px;top:709.6px;width:16.6px;height:105px;border:1px solid #8cc4f0;border-radius:2.5px;background:linear-gradient(90deg,#dcf4fe,#b4e4fb 55%,#9cd8f8)"><svg width="15" height="103" viewBox="0 0 15 103" style="position:absolute;left:0;top:0"><path d="M4 49.5H10.5M4 51.5H10.5M4 53.5H10.5" stroke="#3a78d8" stroke-width="1" fill="none"/></svg></div>
<div class="abs" style="left:935.3px;top:841.6px;width:16.6px;height:14px;border:1px solid #a4d0f2;border-radius:2.5px;background:linear-gradient(#e4f7fe,#c4ebfc)"><svg width="15" height="12" viewBox="0 0 15 12" style="position:absolute;left:0;top:0"><path d="M3.2 3.6L7.3 7.6L11.4 3.6" stroke="#2a58d4" stroke-width="2.3" fill="none"/></svg></div>
</body></html>
